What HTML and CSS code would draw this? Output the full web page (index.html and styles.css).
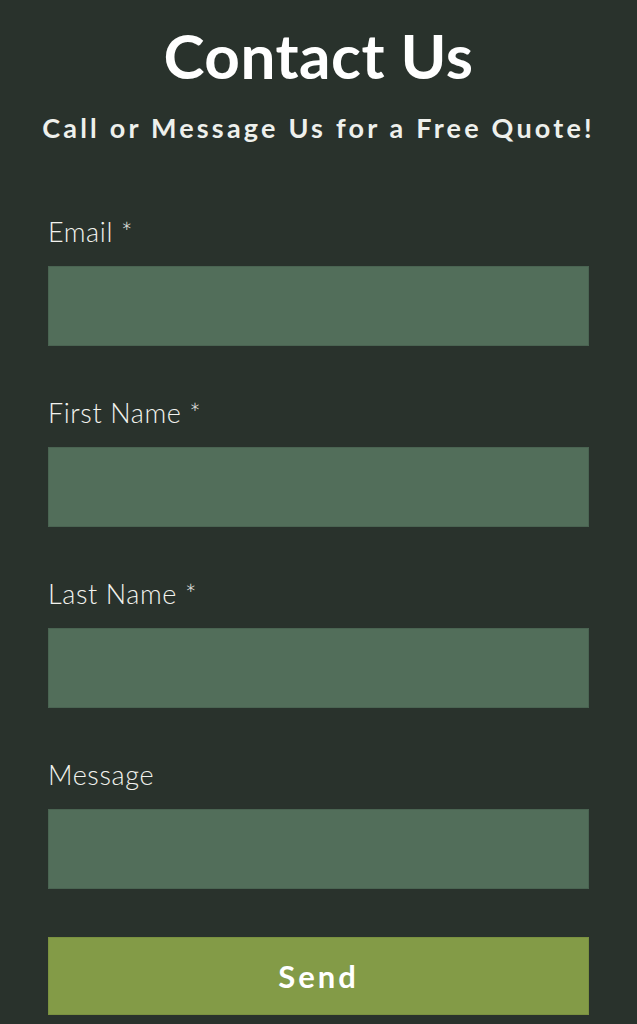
FILE: index.html
```html
<!DOCTYPE html>
<html lang="en">
<head>
<meta charset="utf-8">
<title>Contact Us</title>
<link rel="stylesheet" href="styles.css">
</head>
<body>
<main class="contact">
  <h1 class="title">Contact Us</h1>
  <p class="subtitle">Call or Message Us for a Free Quote!</p>
  <form class="form">
    <label class="field">
      <span class="label">Email *</span>
      <input class="input" type="email">
    </label>
    <label class="field">
      <span class="label">First Name *</span>
      <input class="input" type="text">
    </label>
    <label class="field">
      <span class="label">Last Name *</span>
      <input class="input" type="text">
    </label>
    <label class="field">
      <span class="label">Message</span>
      <input class="input" type="text">
    </label>
    <button class="send" type="button">Send</button>
  </form>
</main>
</body>
</html>
```
FILE: styles.css
```css
html, body {
  margin: 0;
  padding: 0;
  background: #29322c;
}
body {
  font-family: "Lato", "Open Sans", "Liberation Sans", sans-serif;
  color: #ffffff;
  min-height: 1024px;
}
.contact {
  display: flex;
  flex-direction: column;
  padding: 20px 48px 0;
}
.title {
  margin: 0;
  text-align: center;
  font-size: 62px;
  line-height: 70px;
  font-weight: 700;
  letter-spacing: 0.5px;
  color: #ffffff;
}
.subtitle {
  margin: 21px -20px 0;
  text-align: center;
  font-size: 27px;
  line-height: 34px;
  font-weight: 700;
  letter-spacing: 3.2px;
  color: #eef0ec;
}
.form {
  display: flex;
  flex-direction: column;
  margin-top: 72px;
}
.field {
  display: flex;
  flex-direction: column;
  gap: 19px;
  margin-bottom: 52px;
}
.field:last-of-type {
  margin-bottom: 48px;
}
.label {
  font-size: 27px;
  line-height: 30px;
  font-weight: 300;
  letter-spacing: 0.6px;
  color: #f2f2ee;
}
.input {
  display: block;
  box-sizing: border-box;
  width: 100%;
  height: 80px;
  margin: 0;
  border: 1px solid #4a6452;
  background: #526e5a;
  outline: none;
}
.send {
  box-sizing: border-box;
  width: 100%;
  height: 78px;
  border: 1px solid #7a9140;
  background: #839b47;
  color: #ffffff;
  font-family: inherit;
  font-size: 31px;
  font-weight: 700;
  letter-spacing: 3px;
  cursor: pointer;
}
```
